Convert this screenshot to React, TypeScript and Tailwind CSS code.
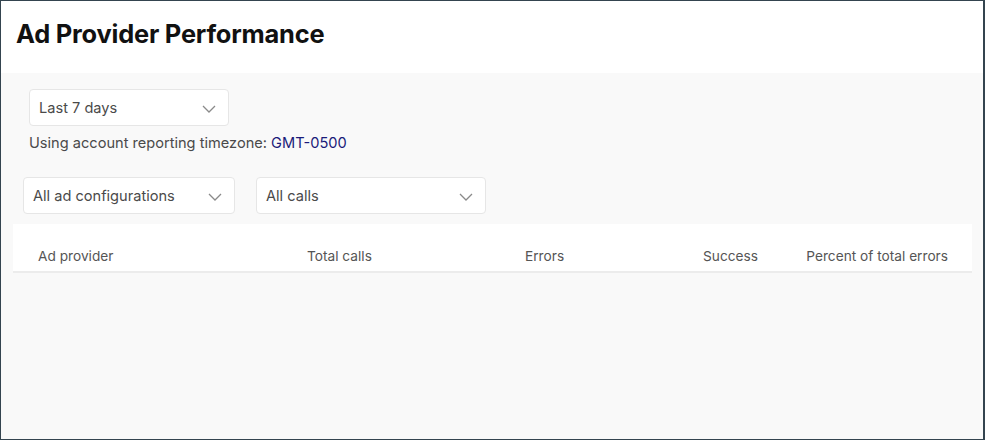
function Chevron() {
  return (
    <svg width="14" height="8" viewBox="0 0 14 8" fill="none" className="shrink-0">
      <path d="M1 1L7 7L13 1" stroke="#8a8a8a" strokeWidth="1.3" />
    </svg>
  );
}

function Select({ label, width }: { label: string; width: string }) {
  return (
    <div
      className={`flex items-center justify-between h-[37px] ${width} pl-[9px] pr-[12px] pt-[2px] bg-white border border-[#e6e6e6] rounded-[4px] text-[14.6px] text-[#4a4a4a]`}
    >
      <span>{label}</span>
      <Chevron />
    </div>
  );
}

export default function App() {
  return (
    <div
      className="w-[985px] h-[440px] flex flex-col border border-r-2 border-[#34444f] bg-[#f9f9f9] overflow-hidden"
      style={{ fontFamily: "Inter, 'Noto Sans', sans-serif" }}
    >
      <header className="h-[72px] shrink-0 bg-white px-[15px] pt-[16px]">
        <h1 className="text-[25.4px] leading-[34px] font-bold text-[#111] tracking-[-0.2px]">
          Ad Provider Performance
        </h1>
      </header>

      <div className="flex flex-col">
        <div className="pl-[28px] pt-[16px]">
          <Select label="Last 7 days" width="w-[200px]" />
          <p className="mt-[6px] text-[14.6px] leading-[22px] text-[#4a4a4a]">
            Using account reporting timezone:{" "}
            <span className="text-[#1b1b7a]">GMT-0500</span>
          </p>
        </div>

        <div className="flex gap-[21px] pl-[22px] mt-[23px]">
          <Select label="All ad configurations" width="w-[212px]" />
          <Select label="All calls" width="w-[230px]" />
        </div>

        <div className="ml-[12px] mr-[11px] mt-[10px] bg-white border-b-2 border-[#ececec]">
          <div className="grid grid-cols-[269px_218px_178px_103px_1fr] items-center h-[47px] pt-[17px] pl-[25px] pr-[24px] text-[13.7px] text-[#555] whitespace-nowrap">
            <span>Ad provider</span>
            <span>Total calls</span>
            <span>Errors</span>
            <span>Success</span>
            <span className="text-right">Percent of total errors</span>
          </div>
        </div>
      </div>
    </div>
  );
}
